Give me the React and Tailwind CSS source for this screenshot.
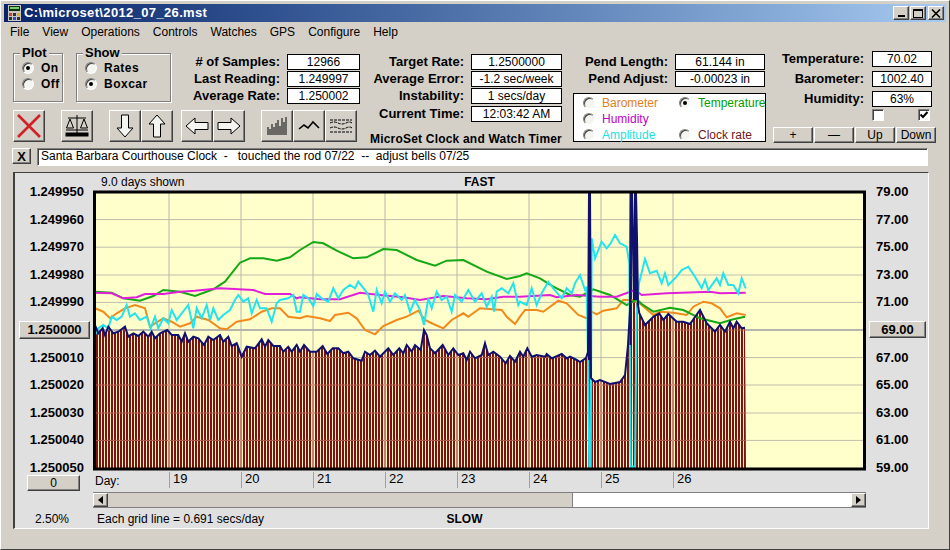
import React from 'react';

const raised = 'border border-t-white border-l-white border-r-[#404040] border-b-[#404040] shadow-[inset_-1px_-1px_0_#808080] bg-[#d4d0c8]';
const sunken = 'border border-t-[#808080] border-l-[#808080] border-r-white border-b-white shadow-[inset_1px_1px_0_#404040]';

// traced from the reference: points are read off 3x crops, so map them back to page pixels
const crop = (ox, oy, pts, from, to) =>
    pts.map(([x, y]) => [ox + x / 3, oy + y / 3]).filter(([x]) => x >= from && x < to);

const green = [
    ...crop(80, 220, [[45,215],[95,218],[130,235],[180,242],[220,228],[250,210],[300,215],[345,228],[400,208],[435,185],[480,128],[510,115],[550,115],[590,122],[630,112],[680,70],[720,65]], 0, 300),
    ...crop(300, 220, [[0,90],[40,66],[70,70],[110,92],[160,115],[200,112],[250,87],[290,90],[350,120],[405,137],[440,122],[490,120],[560,155],[620,177],[680,157],[720,178]], 300, 520),
    ...crop(520, 180, [[0,288],[20,280],[60,295],[100,320],[150,345],[180,350],[220,328],[270,345],[320,375],[350,358],[365,372],[400,395],[450,383],[490,390],[540,415],[600,430],[640,418],[675,410]], 520, 800),
];

const magenta = [
    ...crop(80, 220, [[45,218],[95,220],[130,235],[170,232],[195,222],[250,222],[300,215],[345,212],[420,205],[520,210],[555,222],[630,222],[650,235],[720,238]], 0, 300),
    ...crop(300, 220, [[0,232],[60,238],[120,238],[180,218],[240,225],[310,232],[360,240],[430,228],[500,235],[560,238],[610,230],[720,230]], 300, 520),
    ...crop(520, 180, [[0,350],[90,345],[110,352],[170,345],[240,350],[290,350],[345,330],[365,345],[440,340],[570,335],[600,340],[677,338]], 520, 800),
];

const orange = [
    ...crop(80, 220, [[45,265],[70,275],[90,295],[110,280],[135,265],[165,255],[195,265],[210,320],[225,310],[250,295],[275,305],[300,320],[330,310],[350,290],[385,300],[420,325],[440,328],[470,305],[510,298],[545,275],[575,265],[600,265],[625,290],[660,298],[680,288],[720,295]], 0, 300),
    ...crop(300, 220, [[0,295],[20,288],[60,295],[90,303],[105,285],[145,278],[170,295],[195,330],[225,343],[250,318],[290,300],[320,290],[355,272],[375,300],[400,312],[430,325],[455,300],[490,280],[505,290],[540,265],[605,270],[620,290],[645,312],[670,280],[690,268],[720,270]], 300, 520),
    ...crop(520, 180, [[0,410],[15,390],[50,390],[70,395],[115,362],[140,370],[175,405],[200,415],[215,395],[230,403],[250,392],[290,385],[310,360],[340,360],[365,375],[400,405],[420,395],[460,398],[500,405],[520,380],[550,365],[575,370],[600,385],[620,412],[650,400],[677,405]], 520, 800),
];

const cyan = [
    ...crop(80, 220, [[45,345],[55,325],[70,315],[85,325],[95,290],[110,300],[125,290],[140,255],[150,290],[165,280],[180,300],[200,290],[212,325],[225,290],[235,325],[250,295],[265,310],[275,270],[290,300],[305,280],[325,255],[340,325],[350,265],[365,295],[380,255],[390,300],[400,265],[415,300],[430,285],[450,270],[465,240],[475,225],[490,245],[505,235],[515,280],[530,240],[540,265],[560,265],[575,305],[590,250],[600,240],[625,235],[640,225],[650,275],[660,225],[675,275],[690,225],[700,240],[720,225]], 0, 300),
    ...crop(300, 220, [[0,275],[10,225],[25,235],[40,258],[50,222],[65,235],[85,245],[100,205],[115,235],[130,210],[150,195],[165,205],[175,185],[195,210],[205,225],[220,275],[230,210],[245,250],[255,215],[270,245],[285,220],[305,240],[315,225],[330,275],[345,240],[360,270],[372,315],[385,235],[395,265],[410,215],[425,240],[440,230],[455,275],[465,225],[485,245],[505,210],[525,245],[545,220],[560,260],[575,230],[582,275],[590,215],[605,205],[625,220],[640,190],[655,255]], 300, 520),
    ...crop(520, 180, [[0,365],[20,375],[35,325],[50,375],[65,340],[85,305],[100,325],[125,355],[140,325],[155,340],[165,310],[180,285],[195,330],[200,320],[204,540],[208,860],[212,860],[215,175],[225,235],[245,185],[260,205],[272,190],[285,165],[300,190],[320,200],[328,250],[332,860],[345,860],[350,400],[357,310],[375,237],[390,280],[410,272],[425,310],[435,280],[445,315],[470,290],[485,270],[505,260],[525,290],[545,325],[555,300],[565,330],[590,295],[600,315],[610,280],[625,315],[640,315],[655,340],[665,295],[677,325]], 520, 800),
];

const navy = [
    ...crop(80, 220, [[45,315],[55,340],[68,325],[75,345],[85,320],[100,340],[115,335],[135,320],[145,350],[160,340],[175,348],[190,335],[205,350],[215,335],[225,355],[240,340],[262,330],[275,345],[295,345],[305,365],[315,340],[325,365],[340,350],[355,355],[372,375],[385,350],[400,360],[420,345],[430,365],[445,350],[455,378],[470,370],[485,410],[500,380],[525,385],[545,358],[555,380],[565,360],[580,378],[600,378],[610,395],[625,380],[635,395],[650,375],[660,395]], 0, 300),
    ...crop(300, 220, [[0,395],[12,375],[30,395],[50,395],[68,378],[82,402],[98,385],[115,385],[130,400],[145,395],[160,415],[185,422],[195,395],[210,405],[225,392],[240,410],[265,385],[280,405],[298,385],[310,400],[320,375],[335,395],[345,375],[362,390],[372,330],[380,345],[390,385],[405,400],[428,375],[445,405],[460,385],[475,405],[490,400],[500,420],[510,395],[525,415],[545,405],[555,370],[565,405],[580,395],[600,410],[617,430],[630,408],[645,425]], 300, 520),
    ...crop(520, 180, [[0,515],[10,530],[22,505],[35,530],[50,525],[75,530],[80,522],[95,535],[125,522],[140,535],[150,530],[170,540]], 520, 578),
    [580,362],[586,358],[588,352],[589,193],[590,193],[591,378],[595,382],[600,380],[610,384],[620,382],[625,375],[628,345],[630,310],[631,193],[632,193],[634,300],[635,193],[636,193],[637,238],[638,305],
    ...crop(520, 180, [[358,400],[375,435],[400,410],[418,400],[430,420],[445,402],[470,425],[490,425],[510,432],[540,390],[560,430],[585,455],[600,435],[615,455],[630,425],[640,445],[650,425],[665,445],[675,443]], 520, 800),
];

const toPoints = (pts) => pts.map(([x, y]) => `${x.toFixed(1)},${y.toFixed(1)}`).join(' ');
const barTop = toPoints([[96, 468], ...navy, [746, 468]]);

const gridY = [219.6, 247.2, 275, 302.4, 357.6, 385, 413, 440.4];
const gridX = [169, 241, 313, 385, 457, 529, 601, 673];
const leftLabels = ['1.249950', '1.249960', '1.249970', '1.249980', '1.249990', '1.250000', '1.250010', '1.250020', '1.250030', '1.250040', '1.250050'];
const rightLabels = ['79.00', '77.00', '75.00', '73.00', '71.00', '69.00', '67.00', '65.00', '63.00', '61.00', '59.00'];
const menus = ['File', 'View', 'Operations', 'Controls', 'Watches', 'GPS', 'Configure', 'Help'];

const Radio = ({ on }) => (
    <span className={`w-3 h-3 rounded-full bg-[#f4f4f0] flex items-center justify-center shrink-0 ${sunken}`}>
        {on && <span className="w-1 h-1 rounded-full bg-black" />}
    </span>
);

const RadioRow = ({ on, label }) => (
    <div className="flex items-center gap-[7px] h-4 font-bold tracking-[0.5px]">
        <Radio on={on} />
        <span>{label}</span>
    </div>
);

const Group = ({ title, className, children }) => (
    <div className={`relative border border-[#808080] shadow-[1px_1px_0_white,inset_1px_1px_0_white] ${className}`}>
        <span className="absolute -top-[8px] left-[6px] px-[2px] bg-[#d4d0c8] font-bold text-[13px] leading-[14px]">{title}</span>
        {children}
    </div>
);

const Stat = ({ label, value, labelW, boxW, rowH = 17, boxH = 16 }) => (
    <div className="flex items-center" style={{ height: rowH }}>
        <span className="text-right font-bold text-[13px] whitespace-nowrap pr-[7px]" style={{ width: labelW }}>{label}</span>
        <span className="border border-black bg-white text-center leading-[14px]" style={{ width: boxW, height: boxH }}>{value}</span>
    </div>
);

const ChartKey = ({ on, label, color }) => (
    <div className="flex items-center gap-[7px] h-4">
        <Radio on={on} />
        <span className={color}>{label}</span>
    </div>
);

const ToolBtn = ({ children, className = '' }) => (
    <button className={`w-[32px] h-[32px] flex items-center justify-center ${raised} ${className}`}>{children}</button>
);

const Chart = () => (
    <svg className="block" width="773" height="282" viewBox="93 190 773 282">
        <defs>
            <pattern id="stripes" patternUnits="userSpaceOnUse" width="3" height="10">
                <rect width="3" height="10" fill="#fdf6c4" />
                <rect width="2" height="10" fill="#7a1410" />
            </pattern>
            <clipPath id="bars"><polygon points={barTop} /></clipPath>
        </defs>
        <rect x="94.5" y="192" width="770" height="277" fill="#ffffcc" />
        {gridY.map((y) => <line key={y} x1="96" x2="864" y1={y} y2={y} stroke="#bdbdad" />)}
        {gridX.map((x) => <line key={x} x1={x} x2={x} y1="193" y2="468" stroke="#b4b4ac" />)}
        <line x1="96" x2="864" y1="330" y2="330" stroke="#b4b4ac" strokeWidth="2" />
        <polygon points={barTop} fill="url(#stripes)" />
        <g clipPath="url(#bars)">
            {gridY.map((y) => <line key={y} x1="96" x2="746" y1={y} y2={y} stroke="#b05a48" />)}
            <line x1="96" x2="746" y1="330" y2="330" stroke="#b05a48" />
            {gridX.map((x) => <line key={x} x1={x} x2={x} y1="193" y2="468" stroke="#fdf6c4" />)}
        </g>
        <polyline points={toPoints(orange)} fill="none" stroke="#f08a1c" strokeWidth="2" />
        <polyline points={toPoints(green)} fill="none" stroke="#14a814" strokeWidth="2" />
        <polyline points={toPoints(magenta)} fill="none" stroke="#e020d8" strokeWidth="2" />
        <polyline points={toPoints(cyan)} fill="none" stroke="#22e4ee" strokeWidth="2" />
        <polyline points={toPoints(navy)} fill="none" stroke="#10106e" strokeWidth="2" />
        <line x1="589.5" x2="589.5" y1="193" y2="360" stroke="#10106e" strokeWidth="3" />
        <line x1="630.5" x2="630.5" y1="193" y2="345" stroke="#10106e" strokeWidth="2" />
        <line x1="636" x2="636" y1="193" y2="300" stroke="#10106e" strokeWidth="2" />
        <rect x="94.5" y="192" width="770" height="277" fill="none" stroke="#000" strokeWidth="3" />
    </svg>
);

export default function App() {
    return (
        <div className="w-[950px] h-[550px] overflow-hidden bg-[#d4d0c8] text-black text-[12px] leading-4 border border-t-white border-l-white border-r-[#404040] border-b-[#404040] pt-[3px] font-['Liberation_Sans',Arial,sans-serif]">
            {/* title bar */}
            <div className="ml-[3px] mr-[3px] h-[18px] flex items-center bg-gradient-to-r from-[#0a246a] to-[#a6caf0] pl-[4px] pr-[2px]">
                <svg width="13" height="16" viewBox="0 0 13 16" className="mr-[3px]">
                    <rect width="13" height="16" fill="#c8c8c0" />
                    <rect x="1" y="1" width="11" height="5" fill="#103010" />
                    <rect x="2" y="2" width="9" height="2" fill="#70d070" />
                    <rect x="1" y="8" width="3" height="3" fill="#d04030" />
                    <rect x="5" y="8" width="3" height="3" fill="#303030" />
                    <rect x="9" y="8" width="3" height="3" fill="#e0b020" />
                    <rect x="1" y="12" width="3" height="3" fill="#303030" />
                    <rect x="5" y="12" width="3" height="3" fill="#3050c0" />
                    <rect x="9" y="12" width="3" height="3" fill="#303030" />
                </svg>
                <span className="text-white font-bold text-[13px] tracking-[0.35px]">C:\microset\2012_07_26.mst</span>
                <div className="ml-auto flex">
                    <button className={`w-[16px] h-[14px] flex items-end justify-center pb-[2px] ${raised}`}><span className="block w-[7px] h-[2px] bg-black" /></button>
                    <button className={`w-[16px] h-[14px] ml-px flex items-center justify-center ${raised}`}><span className="block w-[10px] h-[9px] border border-black border-t-2" /></button>
                    <button className={`w-[16px] h-[14px] ml-[2px] flex items-center justify-center ${raised}`}>
                        <svg width="10" height="9" viewBox="0 0 10 9"><path d="M1 0.5 L9 8.5 M9 0.5 L1 8.5" stroke="#000" strokeWidth="1.6" /></svg>
                    </button>
                </div>
            </div>

            {/* menu */}
            <div className="h-[19px] flex items-center gap-[13px] pl-[9px]">
                {menus.map((m) => <span key={m}>{m}</span>)}
            </div>

            {/* controls */}
            <div className="h-[107px] flex">
                <div className="ml-[11px] w-[348px]">
                    <div className="h-[69px] flex">
                        <Group title="Plot" className="mt-[12px] ml-px w-[50px] h-[49px] pl-[8px] pt-[6px]">
                            <RadioRow on label="On" />
                            <RadioRow label="Off" />
                        </Group>
                        <Group title="Show" className="mt-[12px] ml-[13px] w-[95px] h-[49px] pl-[8px] pt-[6px]">
                            <RadioRow label="Rates" />
                            <RadioRow on label="Boxcar" />
                        </Group>
                        <div className="ml-[1px] mt-[12px]">
                            <Stat label="# of Samples:" value="12966" labelW={115} boxW={73} />
                            <Stat label="Last Reading:" value="1.249997" labelW={115} boxW={73} />
                            <Stat label="Average Rate:" value="1.250002" labelW={115} boxW={73} />
                        </div>
                    </div>
                    <div className="flex">
                        <ToolBtn className="ml-px">
                            <svg width="26" height="26" viewBox="0 0 26 26"><path d="M2 2 L24 24 M24 2 L2 24" stroke="#d02028" strokeWidth="2.6" /></svg>
                        </ToolBtn>
                        <ToolBtn className="ml-[16px]">
                            <svg width="24" height="26" viewBox="0 0 24 26" fill="none" stroke="#000">
                                <path d="M12 2 V20 M3 5 H21" />
                                <path d="M5 6 L1.5 15 H8.5 Z M19 6 L15.5 15 H22.5 Z" />
                                <path d="M1 17 H23" />
                                <rect x="1" y="20" width="22" height="3" fill="#000" />
                            </svg>
                        </ToolBtn>
                        <ToolBtn className="ml-[16px]">
                            <svg width="20" height="26" viewBox="0 0 20 26" fill="#f4f4f0" stroke="#000"><path d="M6.5 2 H13.5 V15 H18 L10 24 L2 15 H6.5 Z" /></svg>
                        </ToolBtn>
                        <ToolBtn>
                            <svg width="20" height="26" viewBox="0 0 20 26" fill="#f4f4f0" stroke="#000"><path d="M6.5 24 H13.5 V11 H18 L10 2 L2 11 H6.5 Z" /></svg>
                        </ToolBtn>
                        <ToolBtn className="ml-[8px]">
                            <svg width="26" height="20" viewBox="0 0 26 20" fill="#f4f4f0" stroke="#000"><path d="M24 6.5 V13.5 H11 V18 L2 10 L11 2 V6.5 Z" /></svg>
                        </ToolBtn>
                        <ToolBtn>
                            <svg width="26" height="20" viewBox="0 0 26 20" fill="#f4f4f0" stroke="#000"><path d="M2 6.5 V13.5 H15 V18 L24 10 L15 2 V6.5 Z" /></svg>
                        </ToolBtn>
                        <ToolBtn className="ml-[16px]">
                            <svg width="24" height="24" viewBox="0 0 24 24" stroke="#000"><path d="M3 21 V13 M5 21 V15 M7 21 V10 M9 21 V13 M11 21 V9 M13 21 V6 M15 21 V12 M17 21 V4 M19 21 V8 M21 21 V3" /></svg>
                        </ToolBtn>
                        <ToolBtn>
                            <svg width="24" height="24" viewBox="0 0 24 24" fill="none" stroke="#000" strokeWidth="1.6"><path d="M2 15 L7 11 L11 14 L16 8 L22 14" /></svg>
                        </ToolBtn>
                        <ToolBtn>
                            <svg width="26" height="24" viewBox="0 0 26 24" fill="none" stroke="#000"><path d="M2 6 H24 M2 9 Q6 7 10 9 T18 9 T24 9 M2 14 Q6 12 10 14 T18 14 T24 14 M2 18 H24" strokeDasharray="3 1" /></svg>
                        </ToolBtn>
                    </div>
                </div>

                <div className="w-[202px] pt-[12px]">
                    <Stat label="Target Rate:" value="1.2500000" labelW={111} boxW={91} />
                    <Stat label="Average Error:" value="-1.2 sec/week" labelW={111} boxW={91} />
                    <Stat label="Instability:" value="1 secs/day" labelW={111} boxW={91} />
                    <div className="mt-[1px]"><Stat label="Current Time:" value="12:03:42 AM" labelW={111} boxW={91} /></div>
                    <div className="mt-[9px] text-right font-bold text-[12px] whitespace-nowrap tracking-[0.2px]">MicroSet Clock and Watch Timer</div>
                </div>

                <div className="w-[204px] pt-[12px]">
                    <Stat label="Pend Length:" value="61.144 in" labelW={113} boxW={90} />
                    <Stat label="Pend Adjust:" value="-0.00023 in" labelW={113} boxW={90} />
                    <div className="ml-[11px] mt-[6px] w-[193px] h-[49px] border border-black bg-white grid grid-cols-[96px_1fr] px-[9px] pt-px">
                        <ChartKey label="Barometer" color="text-[#e08020]" />
                        <ChartKey on label="Temperature" color="text-[#00a000]" />
                        <ChartKey label="Humidity" color="text-[#c000c8]" />
                        <span />
                        <ChartKey label="Amplitude" color="text-[#20e0e0]" />
                        <ChartKey label="Clock rate" color="text-[#701818]" />
                    </div>
                </div>

                <div className="pt-[9px] ml-[7px]">
                    <div className="flex flex-col gap-[3px]">
                        {[['Temperature:', '70.02'], ['Barometer:', '1002.40'], ['Humidity:', '63%']].map(([l, v]) => (
                            <div key={l} className="flex items-center h-[17px]">
                                <span className="w-[99px] pr-[8px] text-right font-bold text-[13px] whitespace-nowrap">{l}</span>
                                <span className="w-[60px] h-[16px] border border-black bg-white text-center leading-[14px]">{v}</span>
                            </div>
                        ))}
                    </div>
                    <div className="flex ml-[99px] gap-[34px] mt-[2px]">
                        <span className={`w-3 h-3 bg-white ${sunken}`} />
                        <span className={`w-3 h-3 bg-white flex items-center justify-center ${sunken}`}>
                            <svg width="10" height="10" viewBox="0 0 10 10"><path d="M1.5 4.5 L4 7 L8.5 2" fill="none" stroke="#000" strokeWidth="2" /></svg>
                        </span>
                    </div>
                    <div className="flex gap-px mt-[6px]">
                        <button className={`w-[40px] h-[16px] leading-[12px] ${raised}`}>+</button>
                        <button className={`w-[40px] h-[16px] leading-[12px] ${raised}`}>—</button>
                        <button className={`w-[40px] h-[16px] leading-[12px] ${raised}`}>Up</button>
                        <button className={`w-[40px] h-[16px] leading-[12px] ${raised}`}>Down</button>
                    </div>
                </div>
            </div>

            {/* notes line */}
            <div className="h-[24px] flex items-start pl-[11px]">
                <button className={`w-[19px] h-[16px] flex items-center justify-center font-bold text-[13px] leading-none ${raised}`}>X</button>
                <div className={`ml-[6px] w-[891px] h-[18px] bg-white pl-[3px] leading-[15px] whitespace-pre ${sunken}`}>Santa Barbara Courthouse Clock  -   touched the rod 07/22  --  adjust bells 07/25</div>
            </div>

            {/* chart panel */}
            <div className="ml-[12px] w-[916px] h-[357px] bg-[#e0e0e0] border-2 border-t-[#404040] border-l-[#404040] border-r-white border-b-white border-t border-r border-b flex">
                <div className="w-[78px] shrink-0 pt-[11px]">
                    <div className="h-[292px] flex flex-col justify-between items-end pr-[9px] font-bold text-[13px]">
                        {leftLabels.map((l) => l === '1.250000' ? (
                            <div key={l} className="h-4 flex items-center">
                                <button className={`w-[71px] -mr-[6px] h-[18px] shrink-0 text-center ${raised}`}>{l}</button>
                            </div>
                        ) : (
                            <span key={l} className="h-4 leading-4">{l}</span>
                        ))}
                    </div>
                    <button className={`block ml-[12px] mt-[-1px] w-[53px] h-[16px] leading-[12px] ${raised}`}>0</button>
                    <div className="ml-[20px] mt-[20px]">2.50%</div>
                </div>

                <div className="w-[773px] shrink-0">
                    <div className="h-[17px] relative flex items-center justify-center font-bold pt-[1px]">
                        <span className="absolute left-[8px] font-normal">9.0 days shown</span>
                        <span>FAST</span>
                    </div>
                    <Chart />
                    <div className="h-[20px] flex">
                        <span className="w-[76px] pl-[2px] pt-[1px]">Day:</span>
                        {['19', '20', '21', '22', '23', '24', '25', '26'].map((d) => (
                            <span key={d} className="w-[72px] h-[16px] border-l border-[#a0a0a0] pl-[3px] text-[13px] leading-[14px]">{d}</span>
                        ))}
                    </div>
                    <div className="h-[16px] flex border-t border-[#808080] border-b">
                        <button className={`w-[15px] h-full flex items-center justify-center ${raised}`}>
                            <svg width="5" height="8" viewBox="0 0 5 8"><path d="M5 0 V8 L0 4 Z" /></svg>
                        </button>
                        <div className="w-[465px] h-full bg-[#d4d0c8] border-r border-[#808080]" />
                        <div className="flex-1 h-full bg-white" />
                        <button className={`w-[15px] h-full flex items-center justify-center ${raised}`}>
                            <svg width="5" height="8" viewBox="0 0 5 8"><path d="M0 0 V8 L5 4 Z" /></svg>
                        </button>
                    </div>
                    <div className="relative mt-[3px] flex justify-center font-bold">
                        <span className="absolute left-[4px] font-normal">Each grid line = 0.691 secs/day</span>
                        <span className="-ml-[30px]">SLOW</span>
                    </div>
                </div>

                <div className="pt-[11px] flex-1">
                    <div className="h-[292px] flex flex-col justify-between items-start pl-[10px] font-bold text-[13px]">
                        {rightLabels.map((l) => l === '69.00' ? (
                            <div key={l} className="h-4 flex items-center">
                                <button className={`w-[57px] -ml-[7px] h-[17px] shrink-0 text-center ${raised}`}>{l}</button>
                            </div>
                        ) : (
                            <span key={l} className="h-4 leading-4">{l}</span>
                        ))}
                    </div>
                </div>
            </div>
        </div>
    );
}
